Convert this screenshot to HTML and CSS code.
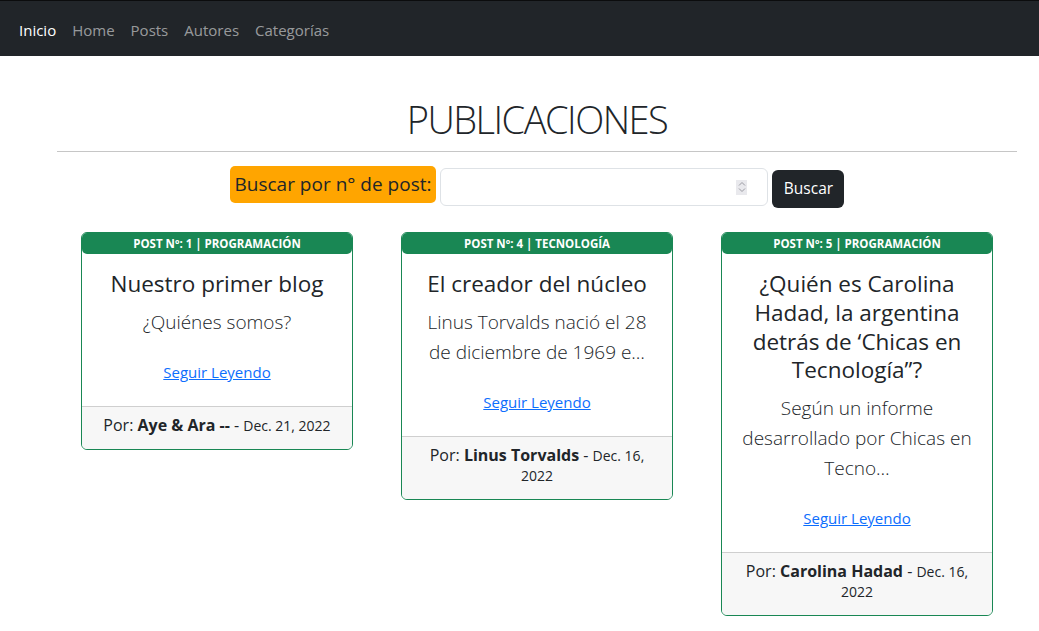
FILE: index.html
```html
<!DOCTYPE html>
<html lang="es">
<head>
<meta charset="utf-8">
<title>Publicaciones</title>
<link rel="stylesheet" href="styles.css">
</head>
<body>
<nav class="navbar">
  <a class="nav-link active" href="#">Inicio</a>
  <a class="nav-link" href="#">Home</a>
  <a class="nav-link" href="#">Posts</a>
  <a class="nav-link" href="#">Autores</a>
  <a class="nav-link" href="#">Categorías</a>
</nav>
<main class="page">
  <h1 class="page-title">PUBLICACIONES</h1>
  <hr class="divider">
  <form class="search">
    <label class="search-label" for="num">Buscar por n° de post:</label>
    <div class="search-input">
      <input id="num" type="text">
      <span class="spinner"><svg width="8" height="12" viewBox="0 0 8 12"><path d="M1 4.5 L4 1.5 L7 4.5 M1 7.5 L4 10.5 L7 7.5" fill="none" stroke="#9a9aa2" stroke-width="1"/></svg></span>
    </div>
    <button class="search-btn" type="button">Buscar</button>
  </form>
  <section class="cards">
    <article class="card">
      <div class="card-header">POST Nº: 1 | PROGRAMACIÓN</div>
      <div class="card-body">
        <h4 class="card-title">Nuestro primer blog</h4>
        <p class="card-text">¿Quiénes somos?</p>
        <p class="card-link"><a href="#">Seguir Leyendo</a></p>
      </div>
      <div class="card-footer">Por: <b>Aye &amp; Ara --</b> - <small>Dec. 21, 2022</small></div>
    </article>
    <article class="card">
      <div class="card-header">POST Nº: 4 | TECNOLOGÍA</div>
      <div class="card-body">
        <h4 class="card-title">El creador del núcleo</h4>
        <p class="card-text">Linus Torvalds nació el 28 de diciembre de 1969 e…</p>
        <p class="card-link"><a href="#">Seguir Leyendo</a></p>
      </div>
      <div class="card-footer">Por: <b>Linus Torvalds</b> - <small>Dec. 16, 2022</small></div>
    </article>
    <article class="card">
      <div class="card-header">POST Nº: 5 | PROGRAMACIÓN</div>
      <div class="card-body">
        <h4 class="card-title">¿Quién es Carolina Hadad, la argentina detrás de ‘Chicas en Tecnología”?</h4>
        <p class="card-text">Según un informe desarrollado por Chicas en Tecno…</p>
        <p class="card-link"><a href="#">Seguir Leyendo</a></p>
      </div>
      <div class="card-footer">Por: <b>Carolina Hadad</b> - <small>Dec. 16, 2022</small></div>
    </article>
  </section>
</main>
</body>
</html>
```

FILE: styles.css
```css
* { box-sizing: border-box; }
html, body { margin: 0; padding: 0; background: #fff; }
body {
  font-family: "Open Sans", "Noto Sans", sans-serif;
  font-size: 16px;
  line-height: 1.5;
  color: #212529;
}
.navbar {
  height: 56px;
  background: #212529;
  border-top: 1px solid #0b0c0d;
  display: flex;
  align-items: center;
  padding: 3px 11px 0;
}
.nav-link {
  padding: 8px 8px;
  color: rgba(255,255,255,.55);
  text-decoration: none;
  font-size: 15px;
}
.nav-link.active { color: #fff; }

.page { padding-left: 35px; }
.page-title {
  margin: 39px 0 8px;
  text-align: center;
  font-weight: 300;
  font-size: 38px;
  line-height: 48px;
  letter-spacing: -1.5px;
}
.divider {
  width: 960px;
  margin: 0 auto;
  border: 0;
  border-top: 1px solid #c6c6c6;
}
.search {
  display: flex;
  justify-content: center;
  align-items: flex-start;
  gap: 4px;
  margin-top: 14px;
}
.search-label {
  height: 37px;
  line-height: 37px;
  padding: 0 5px;
  background: #ffa500;
  border-radius: 5px;
  font-size: 19px;
}
.search-input {
  margin-top: 2px;
  width: 328px;
  height: 38px;
  border: 1px solid #dee2e6;
  border-radius: 6px;
  display: flex;
  align-items: center;
  padding: 0 20px 0 12px;
}
.search-input input {
  flex: 1;
  min-width: 0;
  border: 0;
  outline: 0;
  font: inherit;
  background: transparent;
}
.spinner {
  width: 11px;
  height: 15px;
  background: #e9e9ed;
  display: flex;
  align-items: center;
  justify-content: center;
}
.search-btn {
  margin-top: 4px;
  height: 38px;
  width: 72px;
  border: 0;
  border-radius: 6px;
  background: #212529;
  color: #fff;
  font: inherit;
  font-size: 15.5px;
}

.cards {
  display: flex;
  justify-content: center;
  align-items: flex-start;
  gap: 48px;
  margin-top: 24px;
}
.card {
  width: 272px;
  border: 1px solid #198754;
  border-radius: 6px;
  overflow: hidden;
  text-align: center;
}
.card-header {
  height: 21px;
  line-height: 21px;
  background: #198754;
  color: #fff;
  font-size: 11.5px;
  font-weight: 700;
  border-radius: 0 0 5px 5px;
}
.card-body { padding: 16px 16px 16px; }
.card-title {
  margin: 0 0 8px;
  font-size: 22.5px;
  font-weight: 400;
  line-height: 28.8px;
}
.card-text {
  margin: 0;
  font-size: 19px;
  font-weight: 300;
  line-height: 30px;
}
.card-link {
  margin: 23px 0 6px;
  line-height: 24px;
  font-size: 15px;
}
.card-link a { color: #0d6efd; }
.card-footer {
  border-top: 1px solid #cfcfcf;
  background: #f7f7f7;
  padding: 8px 16px 14px;
  font-size: 16px;
  line-height: 20px;
}
.card-footer b { line-height: 1; }
.card-footer small { font-size: 14px; line-height: 1; }
```
